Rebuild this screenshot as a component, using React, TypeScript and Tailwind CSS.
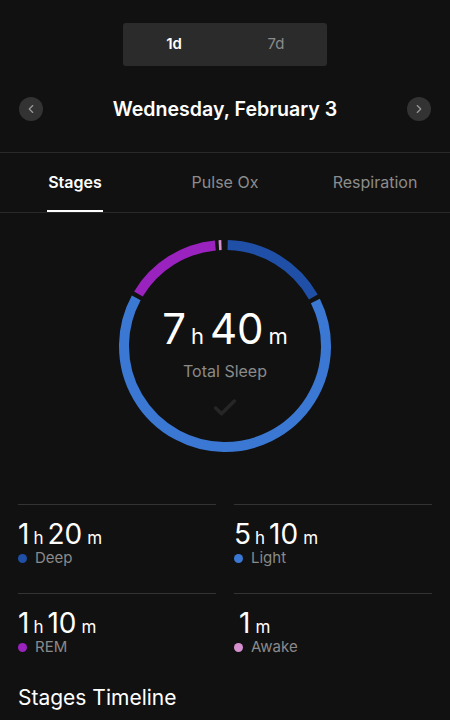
import { ChevronLeft, ChevronRight, Check } from "lucide-react";

const CX = 110;
const CY = 110;
const R = 101;

function pt(a: number) {
  const rad = (a * Math.PI) / 180;
  return [CX + R * Math.sin(rad), CY - R * Math.cos(rad)];
}

function arc(from: number, to: number) {
  const [x1, y1] = pt(from);
  const [x2, y2] = pt(to);
  const large = to - from > 180 ? 1 : 0;
  return `M ${x1} ${y1} A ${R} ${R} 0 ${large} 1 ${x2} ${y2}`;
}

const segments = [
  { from: 1.5, to: 61, color: "#1f4fa6" },
  { from: 63.5, to: 298.5, color: "#3a78d4" },
  { from: 301, to: 354.5, color: "#9a22bf" },
  { from: 356.5, to: 358, color: "#d68fcf" },
];

const stats = [
  { h: "1", m: "20", label: "Deep", dot: "bg-[#1f4fa6]" },
  { h: "5", m: "10", label: "Light", dot: "bg-[#3a78d4]" },
  { h: "1", m: "10", label: "REM", dot: "bg-[#9a22bf]" },
  { h: null, m: "1", label: "Awake", dot: "bg-[#d68fcf]" },
];

export default function App() {
  return (
    <div
      className="w-[450px] h-[720px] overflow-hidden bg-[#111111] text-white"
      style={{ fontFamily: "Inter, 'Noto Sans', sans-serif" }}
    >
      {/* HEADER */}
      <div className="pt-[23px] pb-[31px]">
        <div className="mx-auto flex h-[43px] w-[204px] rounded-[3px] bg-[#2b2b2b] text-[15px]">
          <div className="flex flex-1 items-center justify-center font-semibold">1d</div>
          <div className="flex flex-1 items-center justify-center text-[#8a8a8a]">7d</div>
        </div>
        <div className="mt-[31px] flex h-6 items-center justify-between px-[19px]">
          <div className="flex h-6 w-6 items-center justify-center rounded-full bg-[#333333] text-[#9a9a9a]">
            <ChevronLeft size={14} strokeWidth={2} />
          </div>
          <div className="text-[19.6px] font-semibold leading-6">Wednesday, February 3</div>
          <div className="flex h-6 w-6 items-center justify-center rounded-full bg-[#333333] text-[#9a9a9a]">
            <ChevronRight size={14} strokeWidth={2} />
          </div>
        </div>
      </div>

      {/* TABS */}
      <div className="grid h-[61px] grid-cols-3 border-y border-[#2a2a2a] text-[16px]">
        <div className="relative flex items-center justify-center pb-[2px] font-semibold">
          Stages
          <div className="absolute bottom-0 left-1/2 h-[2px] w-[56px] -translate-x-1/2 bg-white" />
        </div>
        <div className="flex items-center justify-center pb-[2px] text-[#8c8c8c]">Pulse Ox</div>
        <div className="flex items-center justify-center pb-[2px] text-[#8c8c8c]">Respiration</div>
      </div>

      {/* RING */}
      <div className="relative mx-auto mt-[23px] h-[220px] w-[220px]">
        <svg width="220" height="220" viewBox="0 0 220 220" className="absolute inset-0">
          {segments.map((s, i) => (
            <path key={i} d={arc(s.from, s.to)} stroke={s.color} strokeWidth={10} fill="none" />
          ))}
        </svg>
        <div className="absolute inset-0 flex flex-col items-center pt-[72px]">
          <div className="flex items-baseline leading-none">
            <span className="text-[42px]">7</span>
            <span className="ml-[5px] mr-[6px] text-[22px]">h</span>
            <span className="text-[42px]">40</span>
            <span className="ml-[5px] text-[22px]">m</span>
          </div>
          <div className="mt-[9px] text-[16px] text-[#8a8a8a]">Total Sleep</div>
          <Check size={28} strokeWidth={3} className="mt-[11px] text-[#262626]" />
        </div>
      </div>

      {/* STATS */}
      <div className="mt-[48px] grid grid-cols-2 gap-x-[18px] px-[18px]">
        {stats.map((s) => (
          <div key={s.label} className="h-[89px] border-t border-[#333333] pt-[15px]">
            <div className="flex h-[29px] items-baseline leading-[29px]">
              {s.h && (
                <>
                  <span className="text-[28px]">{s.h}</span>
                  <span className="ml-[4px] mr-[4px] text-[17px]">h</span>
                </>
              )}
              <span className={s.h ? "text-[28px]" : "ml-[5px] text-[28px]"}>{s.m}</span>
              <span className="ml-[5px] text-[17px]">m</span>
            </div>
            <div className="flex h-[18px] items-center gap-[8px] text-[15px] leading-[18px] text-[#8a8a8a]">
              <span className={`h-[9px] w-[9px] rounded-full ${s.dot}`} />
              {s.label}
            </div>
          </div>
        ))}
      </div>

      <div className="px-[18px] text-[21px]">Stages Timeline</div>
    </div>
  );
}
